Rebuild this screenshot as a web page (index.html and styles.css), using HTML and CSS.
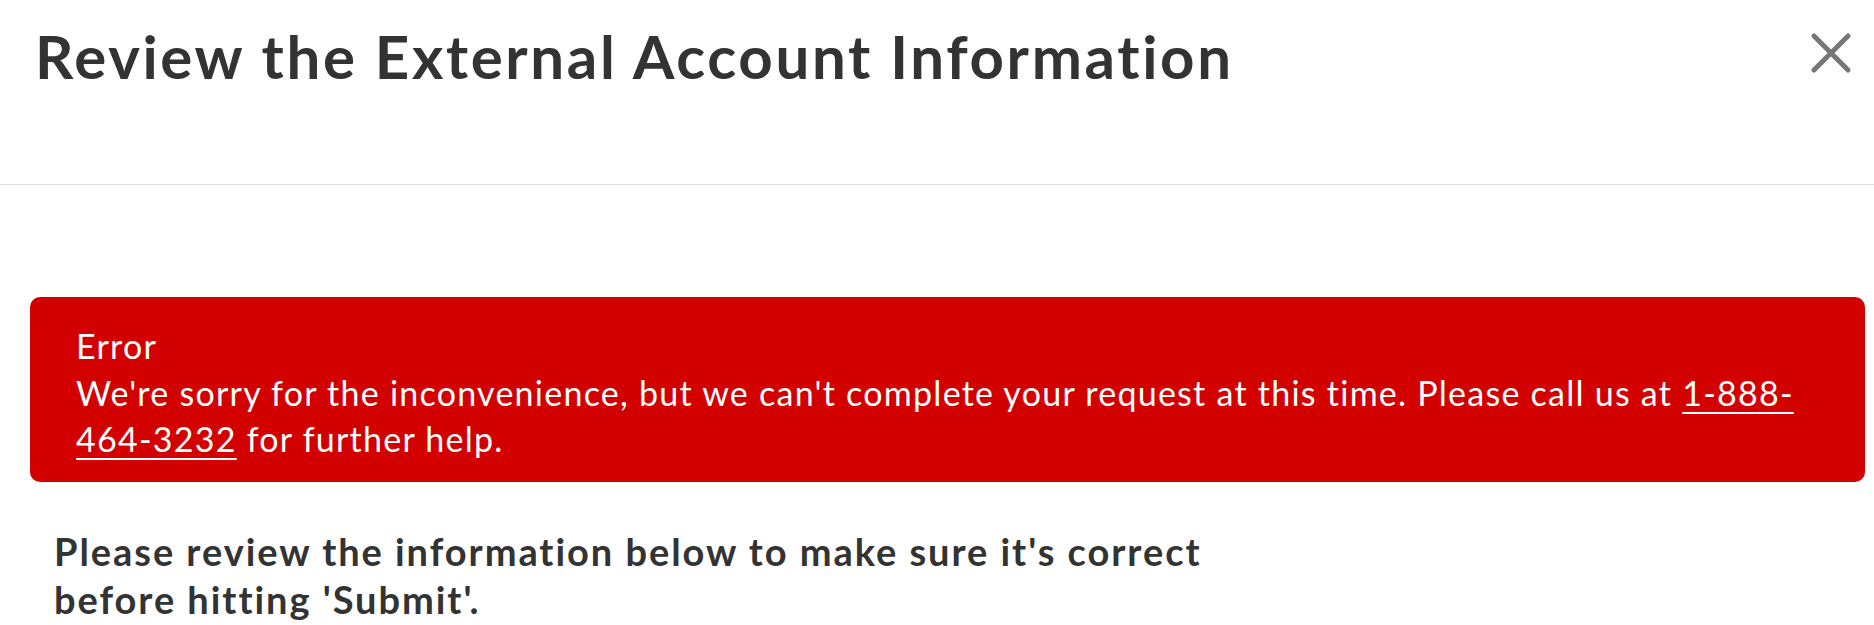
FILE: index.html
```html
<!DOCTYPE html>
<html lang="en">
<head>
<meta charset="utf-8">
<title>Review the External Account Information</title>
<link rel="stylesheet" href="styles.css">
</head>
<body>
<div class="modal">
  <header class="modal-header">
    <h1 class="modal-title">Review the External Account Information</h1>
    <button class="close-btn" aria-label="Close">
      <svg width="40" height="40" viewBox="0 0 40 40" aria-hidden="true">
        <path d="M3 3 L37 37 M37 3 L3 37" stroke="#777" stroke-width="5" stroke-linecap="round" fill="none"/>
      </svg>
    </button>
  </header>
  <div class="modal-body">
    <div class="alert">
      <div class="alert-title">Error</div>
      <div class="alert-text">We're sorry for the inconvenience, but we can't complete your request at this time. Please call us at <a class="alert-link" href="#">1-888-464-3232</a> for further help.</div>
    </div>
    <p class="intro">Please review the information below to make sure it's correct before hitting 'Submit'.</p>
  </div>
</div>
</body>
</html>
```
FILE: styles.css
```css
html, body {
  margin: 0;
  padding: 0;
  background: #fff;
}
body {
  font-family: Lato, "Liberation Sans", sans-serif;
  color: #333;
}
.modal-header {
  display: flex;
  justify-content: space-between;
  align-items: flex-start;
  height: 164px;
  padding: 20px 23px 0 35px;
  border-bottom: 1px solid #dedede;
}
.modal-title {
  margin: 0;
  font-size: 60px;
  line-height: 72px;
  font-weight: 700;
  letter-spacing: 2.65px;
  color: #333;
}
.close-btn {
  margin-top: 13px;
  padding: 0;
  border: 0;
  background: none;
  width: 40px;
  height: 40px;
  cursor: pointer;
}
.close-btn svg {
  display: block;
}
.modal-body {
  padding: 112px 9px 0 30px;
}
.alert {
  background: #d30000;
  color: #fff;
  border-radius: 10px;
  padding: 24px 30px 20px 46px;
  font-size: 34px;
  letter-spacing: 1.25px;
}
.alert-title {
  line-height: 49px;
}
.alert-text {
  line-height: 46px;
  margin-top: 0;
}
.alert-link {
  color: #fff;
  text-decoration: underline;
  text-underline-offset: 6px;
  text-decoration-thickness: 2px;
}
.intro {
  margin: 45px 0 0 24px;
  max-width: 1190px;
  font-size: 38px;
  line-height: 48px;
  font-weight: 700;
  letter-spacing: 1.95px;
  color: #333;
}
```
